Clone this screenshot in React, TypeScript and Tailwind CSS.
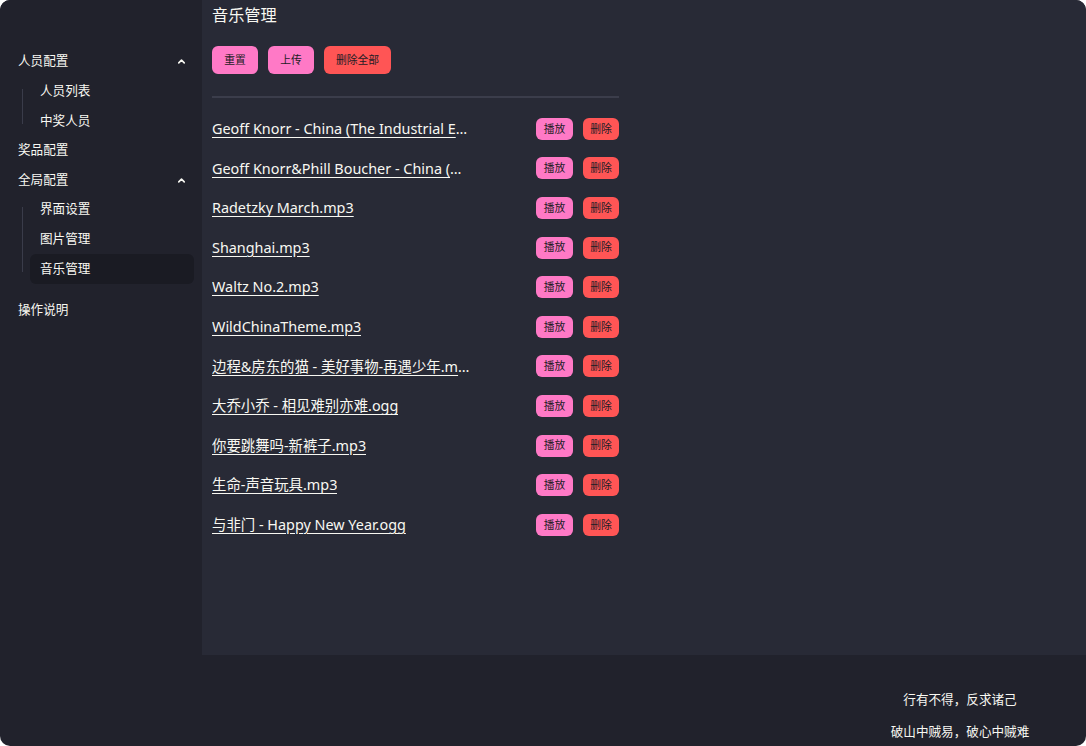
import { ChevronUp } from 'lucide-react'

const songs = [
  'Geoff Knorr - China (The Industrial Era).mp3',
  'Geoff Knorr&Phill Boucher - China (Atomic Era).mp3',
  'Radetzky March.mp3',
  'Shanghai.mp3',
  'Waltz No.2.mp3',
  'WildChinaTheme.mp3',
  '边程&房东的猫 - 美好事物-再遇少年.mp3',
  '大乔小乔 - 相见难别亦难.ogg',
  '你要跳舞吗-新裤子.mp3',
  '生命-声音玩具.mp3',
  '与非门 - Happy New Year.ogg',
]

function SubMenu({ items, active }: { items: string[]; active?: string }) {
  return (
    <ul className="relative ml-[14px] pl-[8px]">
      <span className="absolute left-0 top-[12px] bottom-[12px] w-px bg-[#3a3c4a]" />
      {items.map((item) => (
        <li
          key={item}
          className={`flex h-[29.6px] items-center rounded-[6px] pl-[10px] ${
            item === active ? 'bg-[#1a1b23]' : ''
          }`}
        >
          {item}
        </li>
      ))}
    </ul>
  )
}

function GroupTitle({ label, open }: { label: string; open?: boolean }) {
  return (
    <div className="flex h-[29.6px] items-center justify-between pl-[10px] pr-[7px]">
      <span>{label}</span>
      {open && <ChevronUp className="h-[11px] w-[11px]" strokeWidth={3.5} />}
    </div>
  )
}

export default function App() {
  return (
    <div className="h-[746px] w-full bg-white">
      <div
        className="flex h-full flex-col overflow-hidden rounded-[10px] bg-[#21222c] text-[#f8f8f2]"
        style={{ fontFamily: '"Noto Sans", "Noto Sans CJK SC", sans-serif' }}
      >
        <div className="flex h-[655px]">
          {/* Sidebar */}
          <aside className="w-[202px] shrink-0 bg-[#21222c] px-[8px] pt-[47px] text-[12.6px]">
            <GroupTitle label="人员配置" open />
            <SubMenu items={['人员列表', '中奖人员']} />
            <GroupTitle label="奖品配置" />
            <GroupTitle label="全局配置" open />
            <SubMenu items={['界面设置', '图片管理', '音乐管理']} active="音乐管理" />
            <div className="mt-[12px]">
              <GroupTitle label="操作说明" />
            </div>
          </aside>

          {/* Main */}
          <main className="flex-1 bg-[#282a36] pl-[10px] pt-[4px]">
            <h1 className="text-[16.2px] leading-[22px]">音乐管理</h1>
            <div className="mt-[20px] flex gap-[10px] text-[10.8px] text-[#1c1d25]">
              <button className="h-[28px] w-[46px] rounded-[6px] bg-[#ff79c6]">重置</button>
              <button className="h-[28px] w-[46px] rounded-[6px] bg-[#ff79c6]">上传</button>
              <button className="h-[28px] w-[67px] rounded-[6px] bg-[#ff5555]">删除全部</button>
            </div>
            <div className="mt-[22px] h-[2px] w-[407px] bg-[#3b3d4b]" />
            <ul className="mt-[11px] w-[407px]">
              {songs.map((song) => (
                <li key={song} className="flex h-[39.6px] items-center justify-between">
                  <span className="max-w-[258px] truncate text-[14.4px] underline underline-offset-[3px]">
                    {song}
                  </span>
                  <div className="flex gap-[10px] text-[10.8px] text-[#1c1d25]">
                    <button className="h-[22px] w-[37px] rounded-[6px] bg-[#ff79c6]">播放</button>
                    <button className="h-[22px] w-[36px] rounded-[6px] bg-[#ff5555]">删除</button>
                  </div>
                </li>
              ))}
            </ul>
          </main>
        </div>

        {/* Footer */}
        <footer className="flex flex-1 justify-end">
          <div className="flex w-[252px] flex-col items-center pt-[35px] text-[12.6px]">
            <p className="leading-[20px]">行有不得，反求诸己</p>
            <p className="mt-[12px] leading-[20px]">破山中贼易，破心中贼难</p>
          </div>
        </footer>
      </div>
    </div>
  )
}
